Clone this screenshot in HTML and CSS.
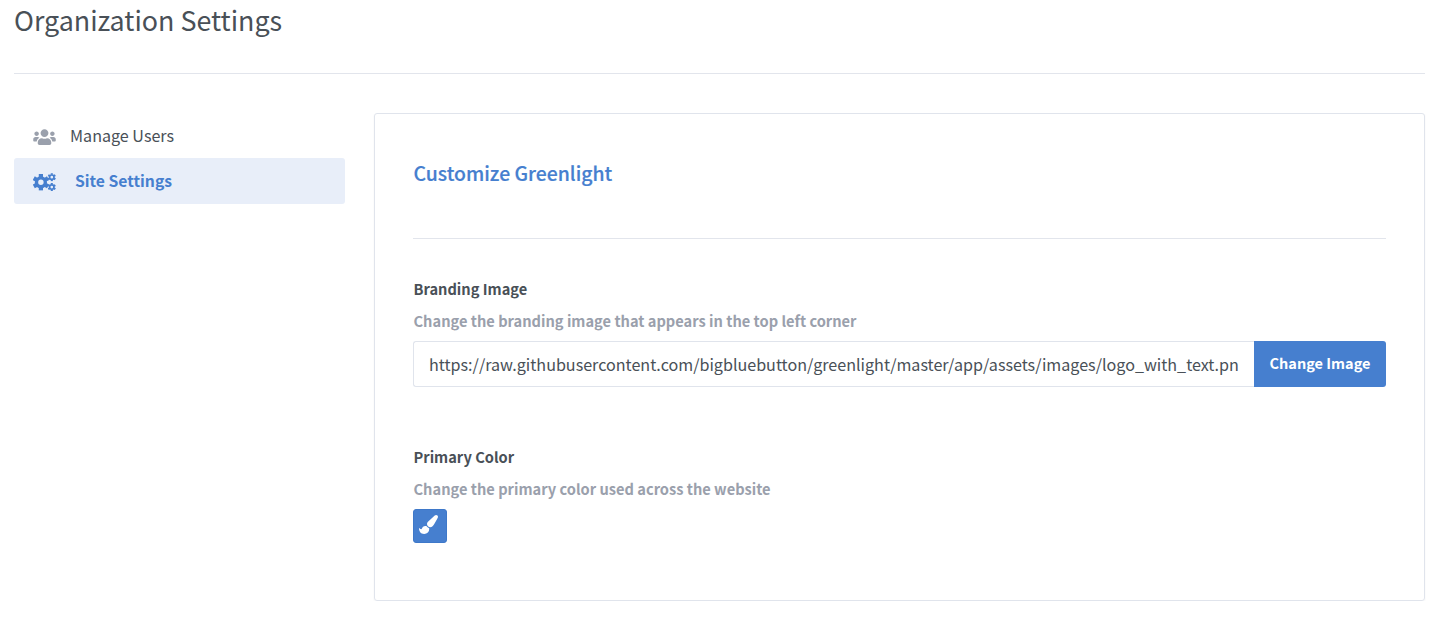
FILE: index.html
```html
<!DOCTYPE html>
<html lang="en">
<head>
<meta charset="utf-8">
<title>Organization Settings</title>
<link rel="stylesheet" href="styles.css">
</head>
<body>
<svg class="defs" width="0" height="0" aria-hidden="true">
  <symbol id="gear" viewBox="-10 -10 20 20">
    <path fill="none" stroke="currentColor" stroke-width="4" d="M5.200 0A5.200 5.200 0 1 1-5.200 0A5.200 5.200 0 1 1 5.200 0Z"/>
    <path fill="none" stroke="currentColor" stroke-width="5" d="M0-9.700V-6M0 9.700V6M8.400-4.850L5.200-3M-8.400 4.850L-5.200 3M8.400 4.850L5.200 3M-8.400-4.850L-5.200-3"/>
  </symbol>
</svg>
<main class="page">
  <h1 class="page-title"><span>Organization Settings</span></h1>
  <div class="layout">
    <nav class="menu">
      <a class="item"><svg class="item-icon" viewBox="0 0 640 512"><path fill="currentColor" d="M96 224c35.300 0 64-28.700 64-64s-28.700-64-64-64-64 28.700-64 64 28.700 64 64 64zm448 0c35.300 0 64-28.700 64-64s-28.700-64-64-64-64 28.700-64 64 28.700 64 64 64zm32 32h-64c-17.600 0-33.500 7.100-45.100 18.600 40.300 22.100 68.900 62 75.100 109.400h66c17.700 0 32-14.300 32-32v-32c0-35.300-28.700-64-64-64zm-256 0c61.900 0 112-50.100 112-112S381.900 32 320 32 208 82.100 208 144s50.100 112 112 112zm76.800 32h-8.300c-20.800 10-43.900 16-68.500 16s-47.600-6-68.500-16h-8.300C179.600 288 128 339.600 128 403.200V432c0 26.500 21.500 48 48 48h288c26.500 0 48-21.500 48-48v-28.800c0-63.600-51.600-115.200-115.200-115.200zm-223.700-13.400C161.500 263.100 145.600 256 128 256H64c-35.300 0-64 28.700-64 64v32c0 17.700 14.300 32 32 32h65.900c6.300-47.400 34.900-87.300 75.200-109.400z"/></svg><span>Manage Users</span></a>
      <a class="item active"><svg class="item-icon" viewBox="0 0 23 18"><use href="#gear" x="-.6" y=".8" width="17" height="17"/><use href="#gear" x="14.600" y="0" width="8.400" height="8.400"/><use href="#gear" x="14.600" y="9.900" width="8.400" height="8.400"/></svg><span>Site Settings</span></a>
    </nav>
    <section class="card">
      <h2 class="card-title"><span>Customize Greenlight</span></h2>
      <div class="field">
        <div class="label"><span>Branding Image</span></div>
        <div class="hint"><span>Change the branding image that appears in the top left corner</span></div>
        <div class="input-group">
          <div class="input"><span>https://raw.githubusercontent.com/bigbluebutton/greenlight/master/app/assets/images/logo_with_text.pn</span></div>
          <div class="button"><span>Change Image</span></div>
        </div>
      </div>
      <div class="field">
        <div class="label"><span>Primary Color</span></div>
        <div class="hint"><span>Change the primary color used across the website</span></div>
        <div class="swatch"><svg class="brush" viewBox="0 0 1792 1792"><path fill="currentColor" d="M1615 0q70 0 122.500 46.500t52.500 116.500q0 63-45 151-332 629-465 752-97 91-218 91-126 0-216.500-92.500t-90.500-219.500q0-128 92-212l638-579q59-54 130-54zm-909 1034q39 76 106.500 130t150.500 76l1 71q4 213-129.500 347t-348.500 134q-123 0-218-46.500t-152.500-127.500-86.500-183-29-220q7 5 41 30t62 44.500 59 36.500 46 17q41 0 55-37 25-66 57.500-112.500t69.500-76 88-47.500 103-25.500 125-10.500z"/></svg></div>
      </div>
    </section>
  </div>
</main>
</body>
</html>
```
FILE: styles.css
```css
* { box-sizing: border-box; }
body {
  margin: 0;
  background: #fff;
  color: #495057;
  font-family: "Noto Sans CJK SC", "Open Sans", sans-serif;
}
.defs { display: block; }
.page { padding: 0 21px 0 14px; }
.page-title {
  margin: 0;
  height: 74px;
  border-bottom: 1px solid #e2e5ec;
  font-size: 26.85px;
  line-height: 40px;
  font-weight: 400;
  white-space: nowrap;
}
.layout { display: flex; gap: 29px; padding-top: 39px; }
.menu { width: 331px; flex: none; white-space: nowrap; }
.item {
  display: flex;
  align-items: center;
  height: 45px;
  padding-left: 19px;
  gap: 14px;
  font-size: 16.1px;
  line-height: 45px;
  color: #495057;
}
.item.active {
  height: 46px;
  gap: 19px;
  border-radius: 3px;
  background: #e8eef9;
  color: #467fcf;
  font-size: 15.7px;
  font-weight: 700;
  line-height: 46px;
  padding-bottom: 1px;
}
.item-icon { width: 23px; height: 18px; color: #9aa0ac; margin-top: 3px; }
.active .item-icon { color: #467fcf; margin-top: 2px; }
.card {
  flex: 1;
  min-width: 0;
  height: 488px;
  padding: 38px;
  border: 1px solid #e0e4ec;
  border-radius: 3px;
  box-shadow: 0 1px 2px rgba(0, 0, 0, .05);
  white-space: nowrap;
}
.card-title {
  margin: 0 0 37px;
  padding-left: .5px;
  height: 87px;
  border-bottom: 1px solid #e2e5ec;
  color: #467fcf;
  font-size: 19.4px;
  line-height: 41px;
  font-weight: 500;
  -webkit-text-stroke: .2px currentColor;
}
.label, .hint { padding-left: .5px; font-size: 14.65px; line-height: 25px; font-weight: 700; }
.field { height: 168px; }
.label { height: 32px; }
.hint { height: 34px; margin-bottom: -1px; color: #9aa0ac; }
.input-group { display: flex; height: 46px; }
.input {
  flex: 1;
  min-width: 0;
  padding-left: 15px;
  border: 1px solid #e0e4ec;
  border-right: 0;
  border-radius: 3px 0 0 3px;
  font-size: 16.12px;
  line-height: 44px;
}
.button {
  width: 132px;
  border-radius: 0 3px 3px 0;
  background: #467fcf;
  color: #fff;
  font-size: 14.5px;
  font-weight: 700;
  line-height: 44px;
  text-align: center;
}
.swatch {
  display: flex;
  width: 34px;
  height: 34px;
  padding: 5px 0 0 5px;
  border: 1px solid #3e78c9;
  border-radius: 3px;
  background: #467fcf;
  color: #fff;
}
.brush { width: 19px; height: 19px; }
```
